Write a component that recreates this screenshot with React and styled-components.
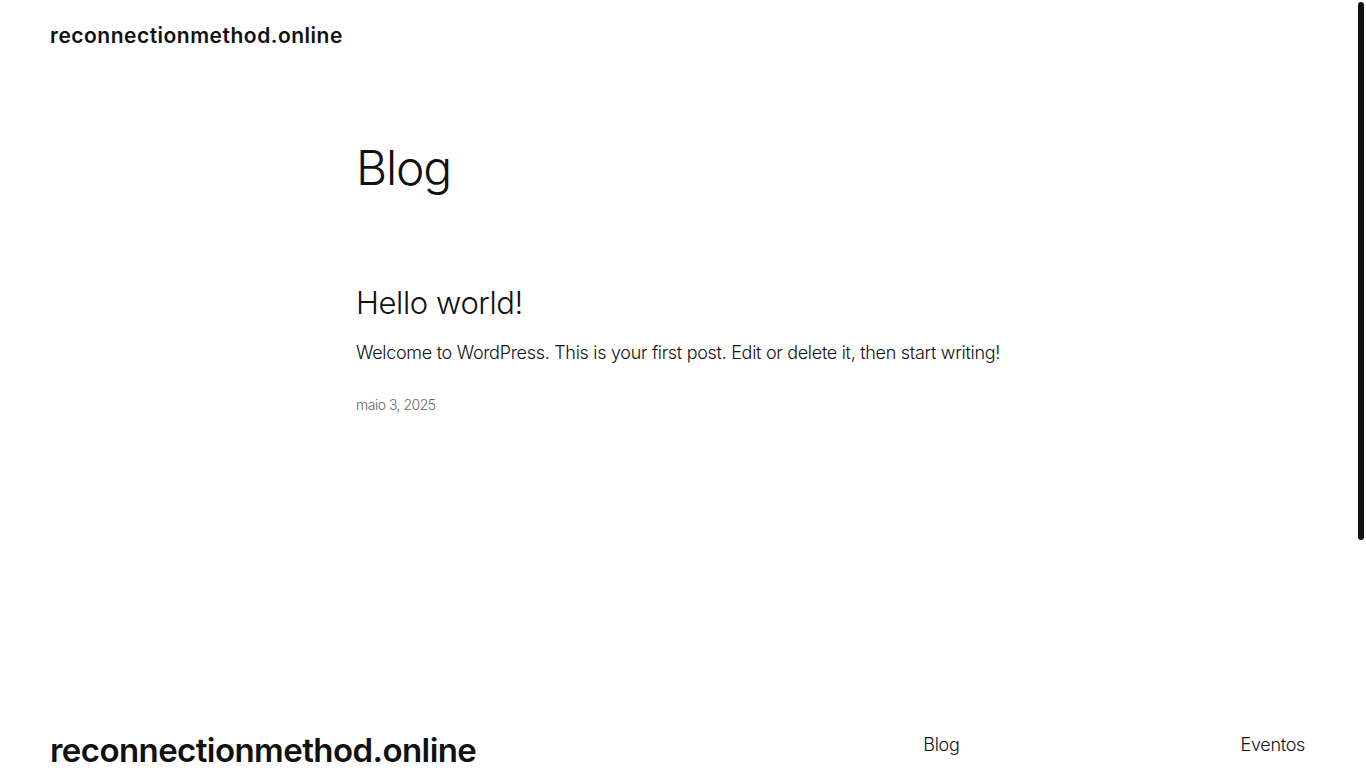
import React from "react";
import styled, { createGlobalStyle } from "styled-components";

const Global = createGlobalStyle`
  * { box-sizing: border-box; }
  body {
    margin: 0;
    background: #fff;
    color: #111;
    font-family: Inter, "Noto Sans", sans-serif;
    -webkit-font-smoothing: antialiased;
  }
  a { color: inherit; text-decoration: none; }
`;

const Page = styled.div`
  display: flex;
  flex-direction: column;
  margin-right: 9px;
`;

const Header = styled.header`
  display: flex;
  align-items: center;
  justify-content: space-between;
  padding: 2px 50px 0;
  height: 70px;
`;

const SiteTitle = styled.a`
  font-size: ${(p) => (p.$big ? "33px" : "21px")};
  font-weight: 600;
  letter-spacing: ${(p) => (p.$big ? "-0.57px" : "0.5px")};
  line-height: 1.2;
`;

const Main = styled.main`
  width: 645px;
  margin: 0 auto;
  padding-top: 69px;
`;

const PageTitle = styled.h1`
  margin: 0;
  font-size: 48px;
  font-weight: 300;
  letter-spacing: -1.2px;
  line-height: 1.2;
`;

const PostList = styled.ul`
  list-style: none;
  margin: 87px 0 0;
  padding: 0;
`;

const Post = styled.li`
  display: flex;
  flex-direction: column;
`;

const PostTitle = styled.h2`
  margin: 0;
  font-size: 31px;
  font-weight: 300;
  letter-spacing: -0.4px;
  line-height: 1.2;
`;

const Excerpt = styled.p`
  margin: 18px 0 0;
  font-size: 18px;
  font-weight: 300;
  letter-spacing: -0.3px;
  line-height: 1.5;
`;

const PostDate = styled.time`
  margin-top: 30px;
  font-size: 14px;
  font-weight: 300;
  color: #666;
  letter-spacing: -0.5px;
`;

const Footer = styled.footer`
  display: flex;
  align-items: flex-start;
  justify-content: space-between;
  padding: 0 52px 0 50px;
  margin-top: 318px;
  height: 300px;
`;

const FooterNav = styled.nav`
  display: flex;
  gap: 281px;
`;

const NavLink = styled.a`
  font-size: 18px;
  font-weight: 300;
  letter-spacing: -0.3px;
  line-height: 1.5;
`;

const ScrollTrack = styled.div`
  position: fixed;
  top: 0;
  right: 0;
  width: 8px;
  height: 100vh;
  background: #fff;
  padding-top: 2px;
`;

const ScrollThumb = styled.div`
  width: 6px;
  height: 538px;
  background: #111;
  border-radius: 3px;
`;

export default function App() {
  return (
    <>
      <Global />
      <Page>
        <Header>
          <SiteTitle href="#">reconnectionmethod.online</SiteTitle>
        </Header>
        <Main>
          <PageTitle>Blog</PageTitle>
          <PostList>
            <Post>
              <PostTitle>Hello world!</PostTitle>
              <Excerpt>
                Welcome to WordPress. This is your first post. Edit or delete it, then start writing!
              </Excerpt>
              <PostDate>maio 3, 2025</PostDate>
            </Post>
          </PostList>
        </Main>
        <Footer>
          <SiteTitle href="#" $big>reconnectionmethod.online</SiteTitle>
          <FooterNav>
            <NavLink href="#">Blog</NavLink>
            <NavLink href="#">Eventos</NavLink>
          </FooterNav>
        </Footer>
      </Page>
      <ScrollTrack>
        <ScrollThumb />
      </ScrollTrack>
    </>
  );
}
